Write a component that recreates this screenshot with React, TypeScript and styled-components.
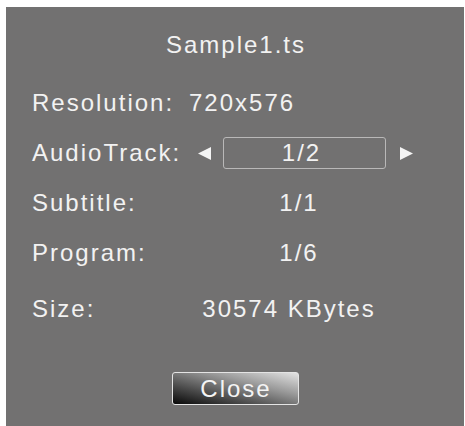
import React from "react";
import styled, { createGlobalStyle } from "styled-components";

const GlobalStyle = createGlobalStyle`
  html, body {
    margin: 0;
    padding: 0;
    background: #ffffff;
    overflow: hidden;
  }
  body {
    font-family: "Liberation Sans", Arial, sans-serif;
  }
`;

const Panel = styled.div`
  margin: 7px 0 0 6px;
  width: 458px;
  height: 419px;
  box-sizing: border-box;
  background: #727171;
  padding: 24px 0 0 26px;
  color: #f2f2f2;
  font-size: 24px;
  letter-spacing: 2px;
  display: flex;
  flex-direction: column;
`;

const Title = styled.div`
  height: 28px;
  line-height: 28px;
  text-align: center;
  margin: 0 26px 19px 0;
  padding-left: 2px;
`;

const Row = styled.div<{ $gap?: number }>`
  display: grid;
  grid-template-columns: 157px 1fr;
  align-items: center;
  height: 50px;
  line-height: 28px;
  margin-top: ${(p) => p.$gap ?? 0}px;
`;

const Label = styled.span`
  white-space: nowrap;
`;

const ValueSlot = styled.div<{ $offset?: number }>`
  width: 200px;
  margin-left: ${(p) => p.$offset ?? 0}px;
  display: flex;
  justify-content: center;
  white-space: nowrap;
`;

const PlainValue = styled.span`
  white-space: nowrap;
`;

const Selector = styled.div`
  display: flex;
  align-items: center;
  margin-left: 8px;
`;

const Arrow = styled.svg`
  width: 15px;
  height: 15px;
  display: block;
  flex: none;
`;

const SelectBox = styled.div`
  width: 163px;
  height: 32px;
  box-sizing: border-box;
  margin: 0 13px 0 11px;
  border: 1px solid #b9b8b8;
  border-radius: 3px;
  display: flex;
  align-items: center;
  justify-content: center;
  padding-right: 6px;
`;

const Footer = styled.div`
  display: flex;
  justify-content: center;
  margin: 38px 26px 0 0;
`;

const CloseButton = styled.button`
  width: 127px;
  height: 33px;
  box-sizing: border-box;
  border: 1px solid #e4e4e4;
  border-radius: 3px;
  background: linear-gradient(
    to top right,
    #080808 0%,
    #4a4a4a 30%,
    #9a9a9a 65%,
    #e2e2e2 100%
  );
  color: #f4f4f4;
  font-family: "Liberation Sans", Arial, sans-serif;
  font-size: 24px;
  letter-spacing: 2px;
  line-height: 28px;
  padding: 0 0 0 2px;
  cursor: pointer;
`;

const LeftArrow = () => (
  <Arrow viewBox="0 0 15 15">
    <polygon points="1,7.5 14,1 14,14" fill="#f4f4f4" />
  </Arrow>
);

const RightArrow = () => (
  <Arrow viewBox="0 0 15 15">
    <polygon points="14,7.5 1,1 1,14" fill="#f4f4f4" />
  </Arrow>
);

export default function App() {
  return (
    <>
      <GlobalStyle />
      <Panel>
        <Title>Sample1.ts</Title>
        <Row>
          <Label>Resolution:</Label>
          <PlainValue>720x576</PlainValue>
        </Row>
        <Row>
          <Label>AudioTrack:</Label>
          <Selector>
            <LeftArrow />
            <SelectBox>1/2</SelectBox>
            <RightArrow />
          </Selector>
        </Row>
        <Row>
          <Label>Subtitle:</Label>
          <ValueSlot $offset={10}>1/1</ValueSlot>
        </Row>
        <Row>
          <Label>Program:</Label>
          <ValueSlot $offset={10}>1/6</ValueSlot>
        </Row>
        <Row $gap={6}>
          <Label>Size:</Label>
          <ValueSlot $offset={0}>30574 KBytes</ValueSlot>
        </Row>
        <Footer>
          <CloseButton>Close</CloseButton>
        </Footer>
      </Panel>
    </>
  );
}
